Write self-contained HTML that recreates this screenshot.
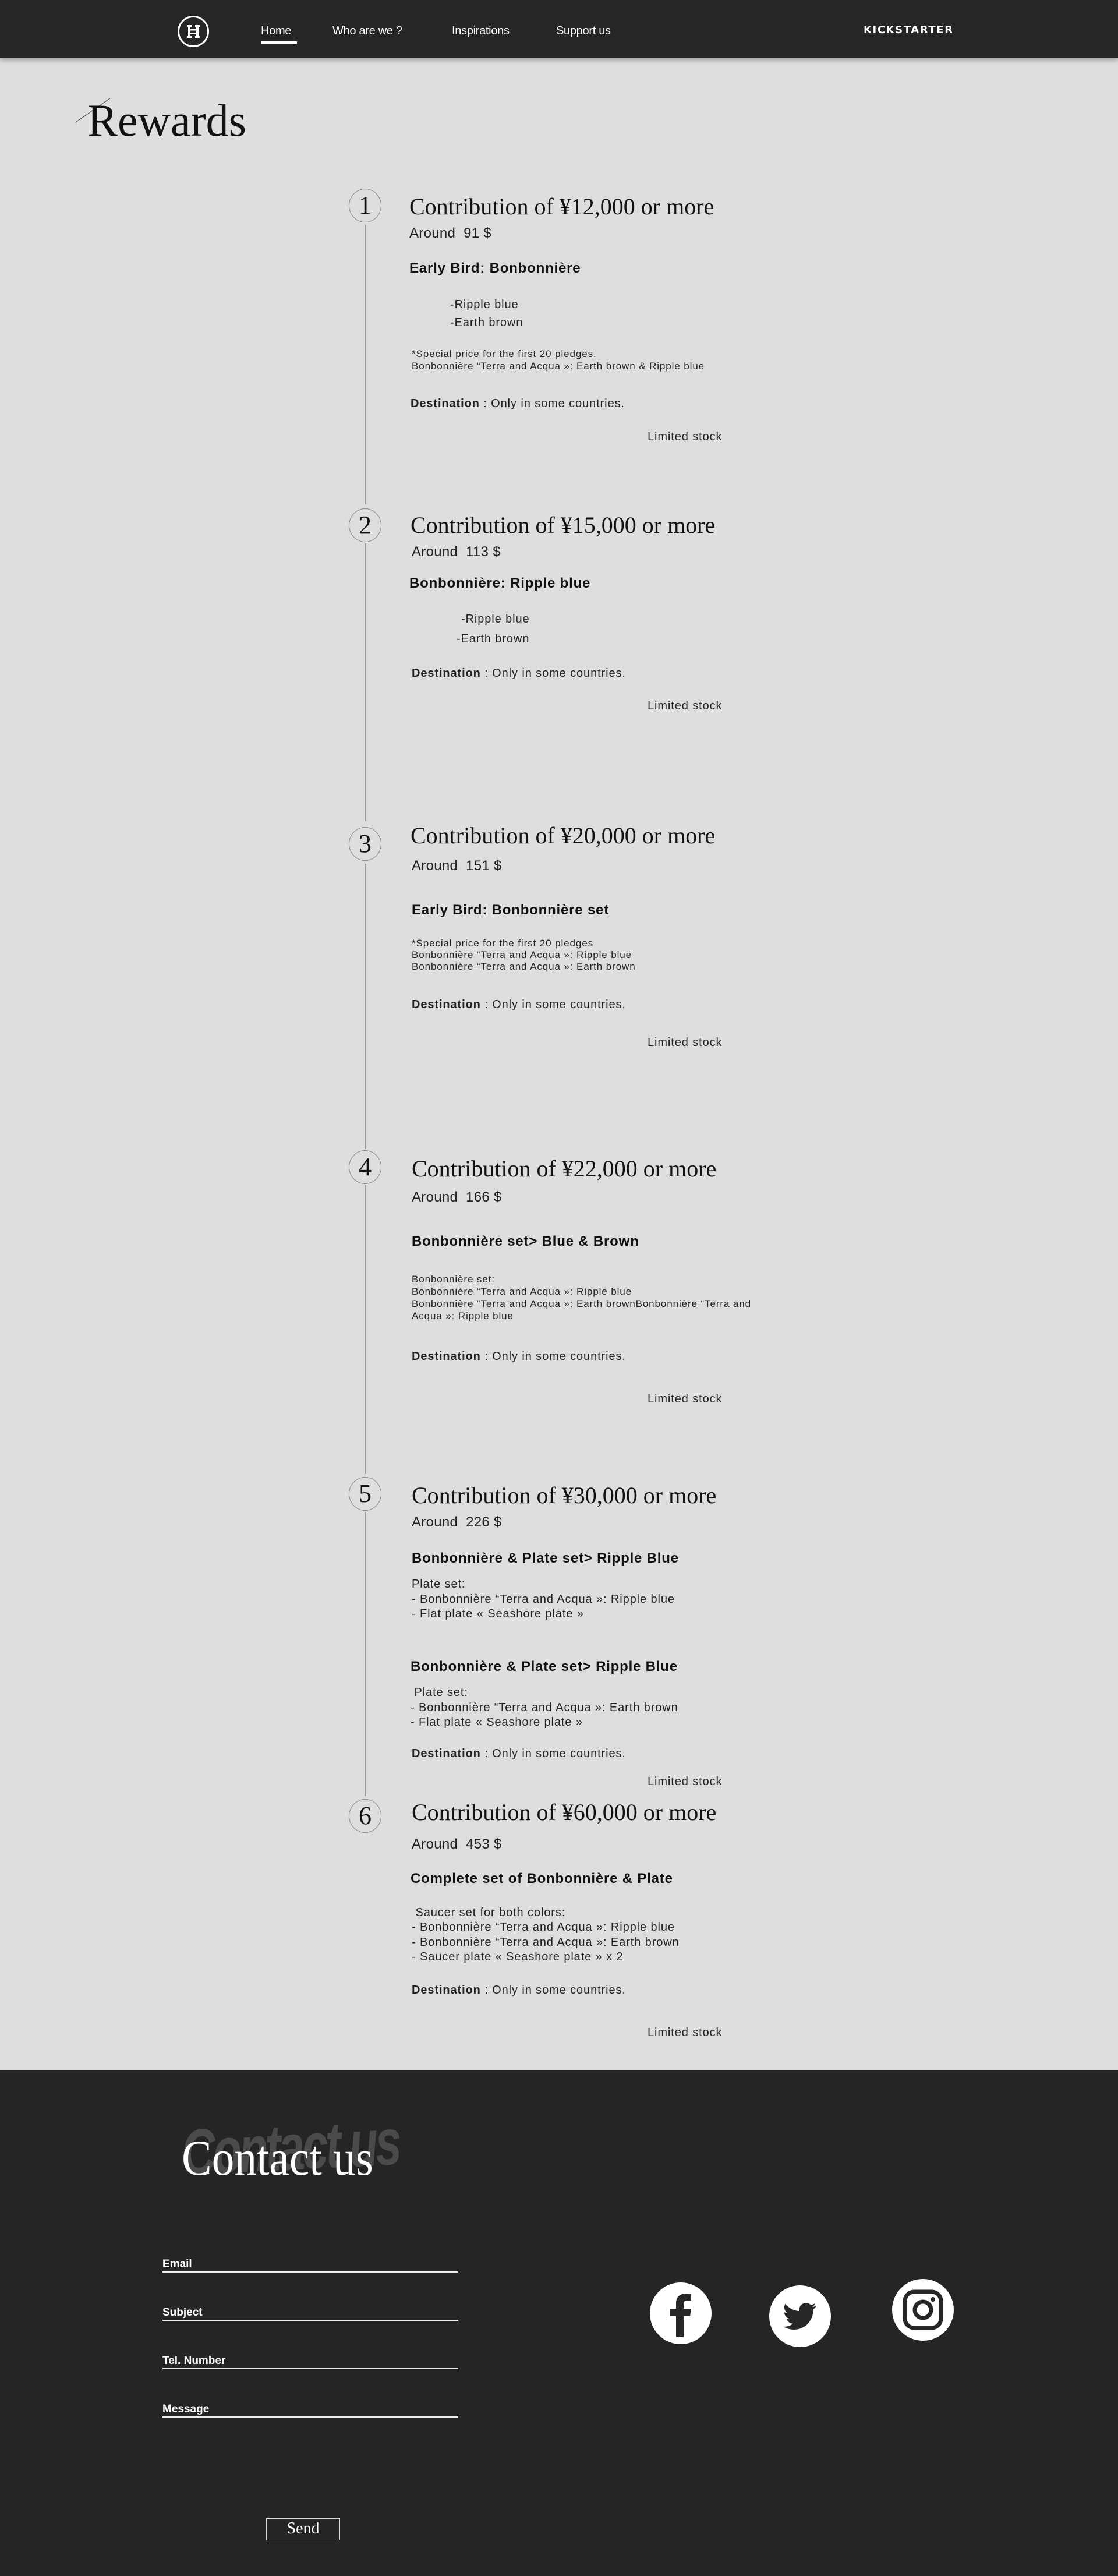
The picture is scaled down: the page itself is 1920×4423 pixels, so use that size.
<!DOCTYPE html>
<html><head><meta charset="utf-8">
<style>
*{margin:0;padding:0;box-sizing:border-box}
html,body{width:1920px;height:4423px;background:#dedede;overflow:hidden}
body{position:relative;font-family:"Liberation Sans",sans-serif;color:#111}
.a{position:absolute;white-space:nowrap}
.nav{position:absolute;left:0;top:0;width:1920px;height:100px;background:#262626;box-shadow:0 4px 8px rgba(0,0,0,.25)}
.nl{position:absolute;top:41px;color:#fff;font-size:20px;line-height:24px;letter-spacing:-0.3px}
.ti{font-family:"Liberation Serif",serif;font-size:40px;line-height:46px;color:#111}
.ar{font-size:24px;line-height:29px;color:#222;letter-spacing:0.3px}
.hd{font-size:24px;line-height:29px;font-weight:bold;color:#111;letter-spacing:0.8px}
.bd{font-size:20px;line-height:24px;color:#222;letter-spacing:0.9px}
.sm{font-size:17px;line-height:21px;color:#222;letter-spacing:0.9px}
.num{position:absolute;width:56px;height:58px;border:1.5px solid #888;border-radius:50%;font-family:"Liberation Serif",serif;font-size:44px;line-height:56px;text-align:center;color:#111}
.vl{position:absolute;left:627px;width:2px;background:#999}
.foot{position:absolute;left:0;top:3555px;width:1920px;height:868px;background:#252525}
.lab{position:absolute;left:279px;width:508px;border-bottom:2px solid #eee;color:#fff;font-size:19px;font-weight:bold;line-height:22px;padding-bottom:1px}
.soc{position:absolute;width:106px;height:106px;border-radius:50%;background:#fff}
</style></head><body>
<div class="nav">
  <svg class="a" style="left:304px;top:26px" width="56" height="56" viewBox="0 0 56 56">
    <circle cx="28" cy="28" r="25.5" fill="none" stroke="#fff" stroke-width="3"/>
    <path d="M17 17h8v3h-2v16h2v3h-8v-3h2V20h-2zM31 17h8v3h-2v16h2v3h-8v-3h2V20h-2z" fill="#fff"/>
    <rect x="23" y="24" width="10" height="2.5" fill="#fff"/><rect x="23" y="30" width="10" height="2.5" fill="#fff"/>
  </svg>
  <div class="nl" style="left:448px">Home</div>
  <div class="a" style="left:448px;top:71px;width:62px;height:4px;background:#fff"></div>
  <div class="nl" style="left:571px">Who are we ?</div>
  <div class="nl" style="left:776px">Inspirations</div>
  <div class="nl" style="left:955px">Support us</div>
  <div class="a" style="left:1483px;top:41px;color:#fff;font-weight:900;font-size:18px;line-height:22px;letter-spacing:1.6px;font-family:'DejaVu Sans',sans-serif">KICKSTARTER</div>
</div>

<svg class="a" style="left:125px;top:165px" width="70" height="50"><line x1="5" y1="45" x2="65" y2="3" stroke="#333" stroke-width="1"/></svg>
<div class="a" style="left:150px;top:162px;font-family:'Liberation Serif',serif;font-size:78px;line-height:90px;color:#111">Rewards</div>

<!-- item 1 -->
<div class="num" style="left:599px;top:324px">1</div>
<div class="vl" style="top:386px;height:480px"></div>
<div class="a ti" style="left:703px;top:332px">Contribution of ¥12,000 or more</div>
<div class="a ar" style="left:703px;top:386px">Around&nbsp; 91 $</div>
<div class="a hd" style="left:703px;top:446px">Early Bird: Bonbonnière</div>
<div class="a bd" style="left:773px;top:511px">-Ripple blue</div>
<div class="a bd" style="left:773px;top:542px">-Earth brown</div>
<div class="a sm" style="left:707px;top:597px">*Special price for the first 20 pledges.<br>Bonbonnière “Terra and Acqua »: Earth brown &amp; Ripple blue</div>
<div class="a bd" style="left:705px;top:681px"><b>Destination</b> : Only in some countries.</div>
<div class="a bd" style="left:1112px;top:738px">Limited stock</div>

<!-- item 2 -->
<div class="num" style="left:599px;top:873px">2</div>
<div class="vl" style="top:933px;height:477px"></div>
<div class="a ti" style="left:705px;top:879px">Contribution of ¥15,000 or more</div>
<div class="a ar" style="left:707px;top:933px">Around&nbsp; 113 $</div>
<div class="a hd" style="left:703px;top:987px">Bonbonnière: Ripple blue</div>
<div class="a bd" style="left:792px;top:1051px">-Ripple blue</div>
<div class="a bd" style="left:784px;top:1085px">-Earth brown</div>
<div class="a bd" style="left:707px;top:1144px"><b>Destination</b> : Only in some countries.</div>
<div class="a bd" style="left:1112px;top:1200px">Limited stock</div>

<!-- item 3 -->
<div class="num" style="left:599px;top:1420px">3</div>
<div class="vl" style="top:1483px;height:490px"></div>
<div class="a ti" style="left:705px;top:1412px">Contribution of ¥20,000 or more</div>
<div class="a ar" style="left:707px;top:1472px">Around&nbsp; 151 $</div>
<div class="a hd" style="left:707px;top:1548px">Early Bird: Bonbonnière set</div>
<div class="a sm" style="left:707px;top:1610px;line-height:20px">*Special price for the first 20 pledges<br>Bonbonnière “Terra and Acqua »: Ripple blue<br>Bonbonnière “Terra and Acqua »: Earth brown</div>
<div class="a bd" style="left:707px;top:1713px"><b>Destination</b> : Only in some countries.</div>
<div class="a bd" style="left:1112px;top:1778px">Limited stock</div>

<!-- item 4 -->
<div class="num" style="left:599px;top:1975px">4</div>
<div class="vl" style="top:2035px;height:496px"></div>
<div class="a ti" style="left:707px;top:1984px">Contribution of ¥22,000 or more</div>
<div class="a ar" style="left:707px;top:2041px">Around&nbsp; 166 $</div>
<div class="a hd" style="left:707px;top:2117px">Bonbonnière set&gt; Blue &amp; Brown</div>
<div class="a sm" style="left:707px;top:2186px;line-height:21px">Bonbonnière set:<br>Bonbonnière “Terra and Acqua »: Ripple blue<br>Bonbonnière “Terra and Acqua »: Earth brownBonbonnière “Terra and<br>Acqua »: Ripple blue</div>
<div class="a bd" style="left:707px;top:2317px"><b>Destination</b> : Only in some countries.</div>
<div class="a bd" style="left:1112px;top:2390px">Limited stock</div>

<!-- item 5 -->
<div class="num" style="left:599px;top:2536px">5</div>
<div class="vl" style="top:2596px;height:488px"></div>
<div class="a ti" style="left:707px;top:2545px">Contribution of ¥30,000 or more</div>
<div class="a ar" style="left:707px;top:2599px">Around&nbsp; 226 $</div>
<div class="a hd" style="left:707px;top:2661px">Bonbonnière &amp; Plate set&gt; Ripple Blue</div>
<div class="a bd" style="left:707px;top:2708px;line-height:25.5px">Plate set:<br>- Bonbonnière “Terra and Acqua »: Ripple blue<br>- Flat plate « Seashore plate »</div>
<div class="a hd" style="left:705px;top:2847px">Bonbonnière &amp; Plate set&gt; Ripple Blue</div>
<div class="a bd" style="left:705px;top:2894px;line-height:25.5px">&nbsp;Plate set:<br>- Bonbonnière “Terra and Acqua »: Earth brown<br>- Flat plate « Seashore plate »</div>
<div class="a bd" style="left:707px;top:2999px"><b>Destination</b> : Only in some countries.</div>
<div class="a bd" style="left:1112px;top:3047px">Limited stock</div>

<!-- item 6 -->
<div class="num" style="left:599px;top:3089px">6</div>
<div class="a ti" style="left:707px;top:3089px">Contribution of ¥60,000 or more</div>
<div class="a ar" style="left:707px;top:3152px">Around&nbsp; 453 $</div>
<div class="a hd" style="left:705px;top:3211px">Complete set of Bonbonnière &amp; Plate</div>
<div class="a bd" style="left:707px;top:3272px;line-height:25.3px">&nbsp;Saucer set for both colors:<br>- Bonbonnière “Terra and Acqua »: Ripple blue<br>- Bonbonnière “Terra and Acqua »: Earth brown<br>- Saucer plate « Seashore plate » x 2</div>
<div class="a bd" style="left:707px;top:3405px"><b>Destination</b> : Only in some countries.</div>
<div class="a bd" style="left:1112px;top:3478px">Limited stock</div>

<!-- footer -->
<div class="foot">
  <div class="a" style="left:312px;top:82px;font-family:'Liberation Sans',sans-serif;font-style:italic;font-weight:bold;font-size:112px;line-height:120px;color:#4a4a4a;letter-spacing:-6px;transform:rotate(-3deg) scaleX(0.72);transform-origin:left">Contact us</div>
  <div class="a" style="left:312px;top:100px;font-family:'Liberation Serif',serif;font-size:86px;line-height:100px;color:#fff;transform:scaleX(0.9);transform-origin:left">Contact us</div>

  <div class="lab" style="top:322px">Email</div>
  <div class="lab" style="top:405px">Subject</div>
  <div class="lab" style="top:488px">Tel. Number</div>
  <div class="lab" style="top:571px">Message</div>

  <div class="a" style="left:457px;top:769px;width:127px;height:38px;border:1.5px solid #ddd;color:#fff;font-family:'Liberation Serif',serif;font-size:28px;line-height:34px;text-align:center">Send</div>

  <div class="soc" style="left:1116px;top:364px">
    <svg width="106" height="106" viewBox="0 0 106 106"><path d="M58 94V58h11l2-13H58v-8c0-4 1.5-6 6-6h7V20c-2-0.3-6-0.6-10-0.6-10 0-16 6-16 16.5V45H34v13h11v36z" fill="#262626"/></svg>
  </div>
  <div class="soc" style="left:1321px;top:369px">
    <svg width="106" height="106" viewBox="0 0 24 24"><g transform="translate(5.5 5.5) scale(0.54)"><path d="M23.6 4.6c-.9.4-1.8.6-2.8.8 1-.6 1.8-1.6 2.1-2.7-.9.6-2 1-3.1 1.2A4.9 4.9 0 0 0 11.5 8.3 13.900 13.900 0 0 1 1.4 3.1a4.9 4.9 0 0 0 1.5 6.6c-.8 0-1.6-.2-2.2-.6 0 2.4 1.700 4.4 3.900 4.8-.7.2-1.5.2-2.2.1.6 2 2.4 3.4 4.6 3.4A9.9 9.9 0 0 1 0 19.5 13.9 13.9 0 0 0 7.5 21.7c9.1 0 14-7.5 14-14v-.6c1-.7 1.8-1.6 2.1-2.5z" fill="#262626"/></g></svg>
  </div>
  <div class="soc" style="left:1532px;top:358px">
    <svg width="106" height="106" viewBox="0 0 106 106"><rect x="22" y="22" width="62" height="62" rx="16" fill="none" stroke="#262626" stroke-width="7"/><circle cx="53" cy="53" r="14" fill="none" stroke="#262626" stroke-width="7"/><circle cx="70" cy="35" r="4" fill="#262626"/></svg>
  </div>
</div>
</body></html>
